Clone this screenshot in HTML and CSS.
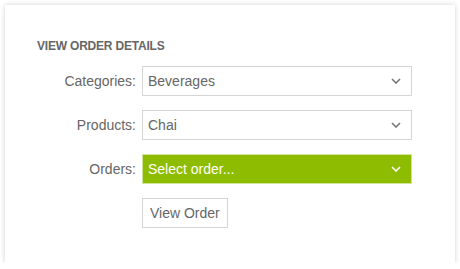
FILE: index.html
```html
<!DOCTYPE html>
<html lang="en">
<head>
    <meta charset="UTF-8">
    <title>View Order Details</title>
    <link rel="stylesheet" href="styles.css">
</head>
<body>
    <div class="card">
        <h4 class="heading">VIEW ORDER DETAILS</h4>
        <div class="form-grid">
            <label class="field-label">Categories:</label>
            <div class="dropdown">
                <span class="dropdown-value">Beverages</span>
                <svg class="chevron" width="10" height="6" viewBox="0 0 10 6"><path d="M1 1 L5 5 L9 1" fill="none" stroke="currentColor" stroke-width="1.6"/></svg>
            </div>

            <label class="field-label">Products:</label>
            <div class="dropdown">
                <span class="dropdown-value">Chai</span>
                <svg class="chevron" width="10" height="6" viewBox="0 0 10 6"><path d="M1 1 L5 5 L9 1" fill="none" stroke="currentColor" stroke-width="1.6"/></svg>
            </div>

            <label class="field-label">Orders:</label>
            <div class="dropdown dropdown-active">
                <span class="dropdown-value">Select order...</span>
                <svg class="chevron" width="10" height="6" viewBox="0 0 10 6"><path d="M1 1 L5 5 L9 1" fill="none" stroke="currentColor" stroke-width="1.6"/></svg>
            </div>

            <span></span>
            <div>
                <button class="btn-view">View Order</button>
            </div>
        </div>
    </div>
</body>
</html>
```

FILE: styles.css
```css
* {
    margin: 0;
    padding: 0;
    box-sizing: border-box;
}

body {
    font-family: 'Liberation Sans', Arial, sans-serif;
    background: #ffffff;
    padding: 5px 5px 0 5px;
}

.card {
    width: 450px;
    height: 258px;
    background: #fff;
    box-shadow: 0 0 5px rgba(0, 0, 0, 0.18);
    padding: 34px 0 0 32px;
}

.heading {
    font-size: 12px;
    font-weight: bold;
    color: #666;
    line-height: 14px;
    margin-bottom: 13px;
    letter-spacing: -0.2px;
}

.form-grid {
    display: grid;
    grid-template-columns: 99px 270px;
    column-gap: 6px;
    row-gap: 14px;
    align-items: center;
}

.field-label {
    font-size: 14px;
    color: #666;
    text-align: right;
}

.dropdown {
    height: 30px;
    border: 1px solid #d5d5d5;
    background: #fff;
    display: flex;
    align-items: center;
    justify-content: space-between;
    padding: 0 10px 0 5px;
    color: #666;
    font-size: 14px;
}

.dropdown .chevron {
    color: #777;
}

.dropdown-active {
    background: #8ebc00;
    border-color: #cfe39a;
    color: #fff;
}

.dropdown-active .chevron {
    color: #fff;
}

.btn-view {
    height: 30px;
    padding: 0 7px;
    border: 1px solid #d5d5d5;
    background: #fff;
    color: #666;
    font-family: inherit;
    font-size: 14px;
}
```
